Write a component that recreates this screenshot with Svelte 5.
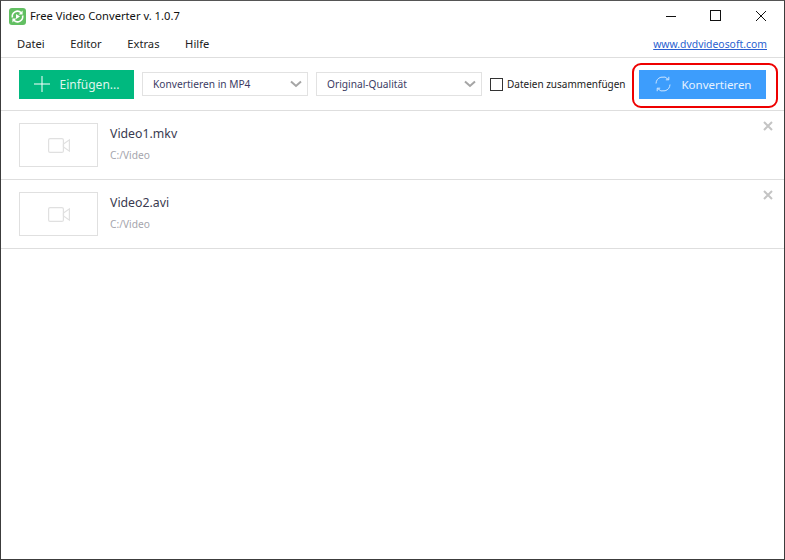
<script>
  let files = [
    { name: "Video1.mkv", path: "C:/Video" },
    { name: "Video2.avi", path: "C:/Video" }
  ];
</script>

<div class="window">
  <div class="titlebar">
    <svg class="logo" width="17" height="17" viewBox="0 0 17 17">
      <rect width="17" height="17" rx="3" fill="#62bf62" />
      <path d="M3.4 9.5A5.2 5.2 0 0 1 12 4.6M13.6 7.5A5.2 5.2 0 0 1 5 12.4" fill="none" stroke="#fff" stroke-width="1.6" />
      <path d="M13.6 2.6v4h-4zM3.4 14.4v-4h4z" fill="#fff" />
      <path d="M7 6 11 8.5 7 11Z" fill="#fff" />
    </svg>
    <span class="title">Free Video Converter v. 1.0.7</span>
    <div class="controls">
      <svg width="12" height="12" viewBox="0 0 12 12"><path d="M1 6.5h10" stroke="#111" fill="none" /></svg>
      <svg width="12" height="12" viewBox="0 0 12 12"><rect x=".5" y=".5" width="10" height="10" stroke="#111" fill="none" /></svg>
      <svg width="12" height="12" viewBox="0 0 12 12"><path d="M1 1l10 10M11 1 1 11" stroke="#111" fill="none" /></svg>
    </div>
  </div>

  <div class="menubar">
    <span>Datei</span>
    <span>Editor</span>
    <span>Extras</span>
    <span>Hilfe</span>
    <a href="#top" class="site">www.dvdvideosoft.com</a>
  </div>

  <div class="toolbar">
    <button class="add">
      <svg width="16" height="16" viewBox="0 0 16 16"><path d="M8 0v16M0 8h16" stroke="#fff" fill="none" /></svg>
      Einfügen...
    </button>
    <div class="select">
      <span>Konvertieren in MP4</span>
      <svg width="12" height="8" viewBox="0 0 12 8"><path d="M1 1.5 6 6l5-4.5" stroke="#a5a5a5" stroke-width="2" fill="none" /></svg>
    </div>
    <div class="select">
      <span>Original-Qualität</span>
      <svg width="12" height="8" viewBox="0 0 12 8"><path d="M1 1.5 6 6l5-4.5" stroke="#a5a5a5" stroke-width="2" fill="none" /></svg>
    </div>
    <label class="merge"><span class="box"></span>Dateien zusammenfügen</label>
    <button class="convert">
      <svg width="16" height="16" viewBox="0 0 16 16" fill="none" stroke="#cfe6ff">
        <path d="M1 7.5A7 7 0 0 1 13.5 3.6M15 8.5A7 7 0 0 1 2.5 12.4" />
        <path d="M13.8 .8v3h-3M2.2 15.2v-3h3" />
      </svg>
      Konvertieren
    </button>
    <div class="highlight"></div>
  </div>

  <div class="list">
    {#each files as file}
      <div class="item">
        <div class="thumb">
          <svg width="22" height="15" viewBox="0 0 22 15" fill="none" stroke="#e0e0e0" stroke-width="1.2">
            <rect x=".6" y=".6" width="14.8" height="13.8" rx="1.5" />
            <path d="M15.5 6 21.4 1.8v11.4L15.5 9Z" />
          </svg>
        </div>
        <div class="info">
          <div class="name">{file.name}</div>
          <div class="path">{file.path}</div>
        </div>
        <svg class="remove" width="10" height="10" viewBox="0 0 10 10"><path d="M1 1l8 8M9 1 1 9" stroke="#c4c4c4" stroke-width="2" fill="none" /></svg>
      </div>
    {/each}
  </div>
</div>

<style>
  :global(body) {
    margin: 0;
    background: #fff;
  }
  .window {
    width: 785px;
    height: 560px;
    box-sizing: border-box;
    border: 1px solid #3c3c3c;
    border-top-color: #555;
    font-family: "Noto Sans", "Open Sans", sans-serif;
    font-size: 11.2px;
    color: #333;
    background: #fff;
    overflow: hidden;
  }
  .titlebar {
    height: 30px;
    display: flex;
    align-items: center;
    padding-left: 8px;
  }
  .logo {
    margin-right: 4px;
  }
  .title {
    color: #111;
    margin-bottom: 2px;
  }
  .controls {
    margin-left: auto;
    display: flex;
    gap: 33px;
    padding-right: 17px;
  }
  .menubar {
    height: 26px;
    box-sizing: content-box;
    display: flex;
    align-items: center;
    gap: 25.6px;
    border-bottom: 1px solid #dedede;
    padding: 0 17px 0 16px;
    color: #222;
  }
  .menubar span {
    margin-bottom: 2px;
  }
  .site {
    margin-left: auto;
    color: #2a5fd0;
    font-size: 10.4px;
  }
  .toolbar {
    height: 52px;
    display: flex;
    align-items: center;
    border-bottom: 1px solid #dedede;
    padding: 0 18px;
    position: relative;
  }
  .add {
    width: 115px;
    height: 29px;
    border: 0;
    background: #00b97f;
    color: #dff5ec;
    font: inherit;
    font-size: 12px;
    display: flex;
    align-items: center;
    justify-content: center;
    gap: 10px;
    padding: 0;
  }
  .select {
    width: 166px;
    height: 24px;
    box-sizing: border-box;
    margin-left: 8px;
    border: 1px solid #e2e2e2;
    display: flex;
    align-items: center;
    justify-content: space-between;
    padding: 0 5px 0 10px;
    color: #3c3c64;
    font-size: 10.2px;
  }
  .merge {
    display: flex;
    align-items: center;
    font-size: 10px;
    color: #222;
    margin-left: 8px;
  }
  .box {
    width: 11px;
    height: 11px;
    border: 1px solid #333;
    margin-right: 4px;
  }
  .convert {
    width: 127px;
    height: 29px;
    margin-left: auto;
    border: 0;
    background: #3d9dfc;
    color: #e8f3ff;
    font: inherit;
    font-size: 11.5px;
    display: flex;
    align-items: center;
    justify-content: center;
    gap: 11px;
    padding: 0 0 0 1px;
  }
  .highlight {
    position: absolute;
    left: 631px;
    top: 5px;
    width: 146px;
    height: 45px;
    box-sizing: border-box;
    border: 2px solid #ee0000;
    border-radius: 9px;
  }
  .item {
    height: 68px;
    display: flex;
    align-items: center;
    border-bottom: 1px solid #dedede;
    padding-left: 18px;
    position: relative;
  }
  .thumb {
    width: 79px;
    height: 44px;
    box-sizing: border-box;
    border: 1px solid #e0e0e0;
    display: flex;
    align-items: center;
    justify-content: center;
    margin-right: 12px;
  }
  .info {
    margin-top: -3px;
  }
  .name {
    font-size: 12.3px;
    color: #3a3a50;
    margin-bottom: 6px;
  }
  .path {
    font-size: 10.2px;
    color: #a5a5ad;
  }
  .remove {
    position: absolute;
    right: 11px;
    top: 10px;
  }
</style>
